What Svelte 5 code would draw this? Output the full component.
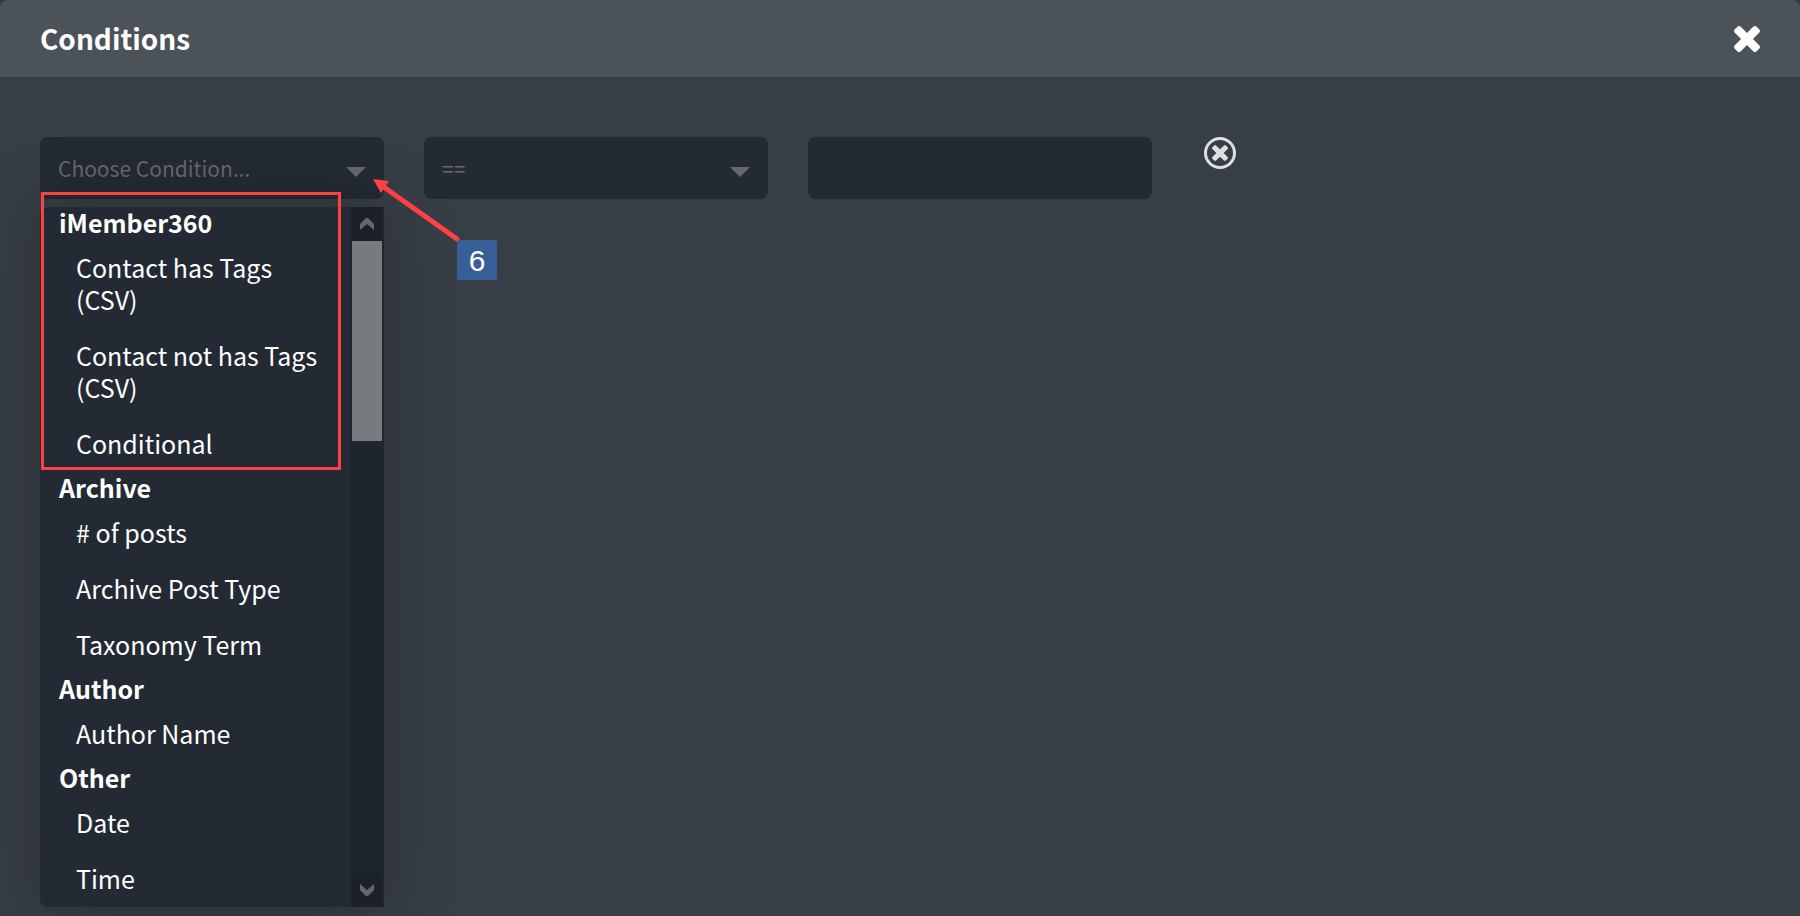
<script lang="ts">
  const groups = [
    {
      label: "iMember360",
      items: ["Contact has Tags (CSV)", "Contact not has Tags (CSV)", "Conditional"],
    },
    {
      label: "Archive",
      items: ["# of posts", "Archive Post Type", "Taxonomy Term"],
    },
    { label: "Author", items: ["Author Name"] },
    { label: "Other", items: ["Date", "Time"] },
  ];
  const conditions = groups.flatMap((group) => group.items);

  let condition = $state("");
  let operator = $state("==");
  let value = $state("");

  function step(amount: number) {
    const next = conditions.indexOf(condition) + amount;
    condition = conditions[Math.max(0, Math.min(next, conditions.length - 1))];
  }
</script>

{#snippet cross(size: number, color: string)}
  <svg width={size} height={size} viewBox="110 366 1188 1188" fill={color}>
    <path
      d="M1298 1322q0 40-28 68l-136 136q-28 28-68 28t-68-28l-294-294-294 294q-28 28-68 28t-68-28l-136-136q-28-28-28-68t28-68l294-294-294-294q-28-28-28-68t28-68l136-136q28-28 68-28t68 28l294 294 294-294q28-28 68-28t68 28l136 136q28 28 28 68t-28 68l-294 294 294 294q28 28 28 68z"
    />
  </svg>
{/snippet}

<main class="modal">
  <header class="header">
    <h1>Conditions</h1>
    <button class="icon-button" aria-label="Close">
      {@render cross(26, "#fff")}
    </button>
  </header>

  <div class="row">
    <div class="field">
      <select class="control" aria-label="Condition" bind:value={condition}>
        <option value="">Choose Condition...</option>
        {#each groups as group}
          <optgroup label={group.label}>
            {#each group.items as item}
              <option>{item}</option>
            {/each}
          </optgroup>
        {/each}
      </select>
      <svg class="caret" width="20" height="10" viewBox="0 0 20 10">
        <path d="M0 0H20L10 10Z" fill="#666a70" />
      </svg>

      <div class="menu">
        <div class="list">
          {#each groups as group}
            <div role="group" aria-label={group.label}>
              <h2>{group.label}</h2>
              {#each group.items as item}
                <button class="item" onclick={() => (condition = item)}>{item}</button>
              {/each}
            </div>
          {/each}
        </div>
        <div class="scrollbar">
          <button class="step" aria-label="Previous condition" onclick={() => step(-1)}>
            <svg width="14" height="12" viewBox="0 0 14 12">
              <path d="M0 6L6 0H8L14 6V12L7 6L0 12Z" fill="#64676c" />
            </svg>
          </button>
          <div class="thumb"></div>
          <button class="step down" aria-label="Next condition" onclick={() => step(1)}>
            <svg width="14" height="12" viewBox="0 0 14 12">
              <path d="M0 0L7 6L14 0V6L8 12H6L0 6Z" fill="#64676c" />
            </svg>
          </button>
        </div>
      </div>

      <!-- callout over the menu -->
      <div class="highlight"></div>
      <svg class="arrow" width="90" height="64" viewBox="0 0 90 64">
        <path d="M8 6L84 60" stroke="#ff4143" stroke-width="5" stroke-linecap="round" />
        <path d="M0 0L16 2L8 14Z" fill="#ff4143" />
      </svg>
      <div class="badge">6</div>
    </div>

    <div class="field">
      <select class="control" aria-label="Operator" bind:value={operator}>
        <option>==</option>
        <option>!=</option>
      </select>
      <svg class="caret" width="20" height="10" viewBox="0 0 20 10">
        <path d="M0 0H20L10 10Z" fill="#666a70" />
      </svg>
    </div>

    <div class="field">
      <input class="control" type="text" aria-label="Value" bind:value />
    </div>

    <button class="icon-button remove" aria-label="Remove condition">
      {@render cross(16, "#dddfe0")}
    </button>
  </div>
</main>

<style>
  :global(body) {
    background: #33383e;
  }

  .modal {
    box-sizing: border-box;
    min-height: 100vh;
    border-radius: 8px 8px 0 0;
    background: #373e45;
    color: #fff;
    font-family: "Noto Sans CJK SC", "Open Sans", sans-serif;
    overflow: hidden;
  }

  .header {
    display: flex;
    align-items: center;
    justify-content: space-between;
    box-sizing: border-box;
    height: 77px;
    padding: 0 40px;
    background: #4b5258;
  }

  h1 {
    margin: 0;
    padding-bottom: 2px;
    font-size: 28px;
    line-height: 40px;
    font-weight: 700;
  }

  h2 {
    margin: 0;
    padding: 0 19px 2px;
    font-size: 25px;
    line-height: 31px;
    font-weight: 700;
  }

  button {
    padding: 0;
    border: 0;
    background: none;
    color: inherit;
    font: inherit;
    cursor: pointer;
  }

  svg {
    display: block;
  }

  .icon-button {
    display: flex;
    align-items: center;
    justify-content: center;
  }

  .row {
    display: flex;
    align-items: flex-start;
    gap: 40px;
    padding: 60px 40px 0;
  }

  .field {
    position: relative;
    flex: 0 0 20%;
  }

  .control {
    display: block;
    box-sizing: border-box;
    width: 100%;
    height: 62px;
    padding: 0 18px;
    border: 0;
    border-radius: 8px;
    background: #232a33;
    color: #67686a;
    font-family: inherit;
    font-size: 21px;
    appearance: none;
    outline: none;
  }

  .caret {
    position: absolute;
    top: 30px;
    right: 18px;
    pointer-events: none;
  }

  .remove {
    box-sizing: border-box;
    width: 32px;
    height: 32px;
    margin-left: 12px;
    border: 3px solid #dddfe0;
    border-radius: 50%;
  }

  .menu {
    position: absolute;
    top: 70px;
    left: 0;
    right: 0;
    display: flex;
    border-radius: 8px 0 0 8px;
    background: #232a33;
    box-shadow: 0 0 60px rgba(34, 32, 35, 0.5);
  }

  .list {
    flex: 1;
  }

  .item {
    display: block;
    width: 100%;
    padding: 11px 18px 13px 36px;
    font-size: 25px;
    line-height: 32px;
    text-align: left;
  }

  .scrollbar {
    display: flex;
    flex-direction: column;
    width: 30px;
    padding: 0 2px;
    background: #1f252c;
  }

  .step {
    display: flex;
    align-items: center;
    justify-content: center;
    height: 34px;
    background: #1c2027;
  }

  .down {
    margin-top: auto;
  }

  .thumb {
    height: 200px;
    background: #777a7f;
  }

  .highlight {
    position: absolute;
    top: 55px;
    left: 1px;
    box-sizing: border-box;
    width: 300px;
    height: 278px;
    border: 3px solid #ff4143;
    pointer-events: none;
  }

  .arrow {
    position: absolute;
    top: 42px;
    left: 333px;
    pointer-events: none;
  }

  .badge {
    position: absolute;
    top: 103px;
    left: 417px;
    width: 40px;
    height: 40px;
    border-radius: 2px;
    background: #365f98;
    font-family: "Liberation Sans", Arial, sans-serif;
    font-size: 30px;
    line-height: 41px;
    text-align: center;
  }
</style>
